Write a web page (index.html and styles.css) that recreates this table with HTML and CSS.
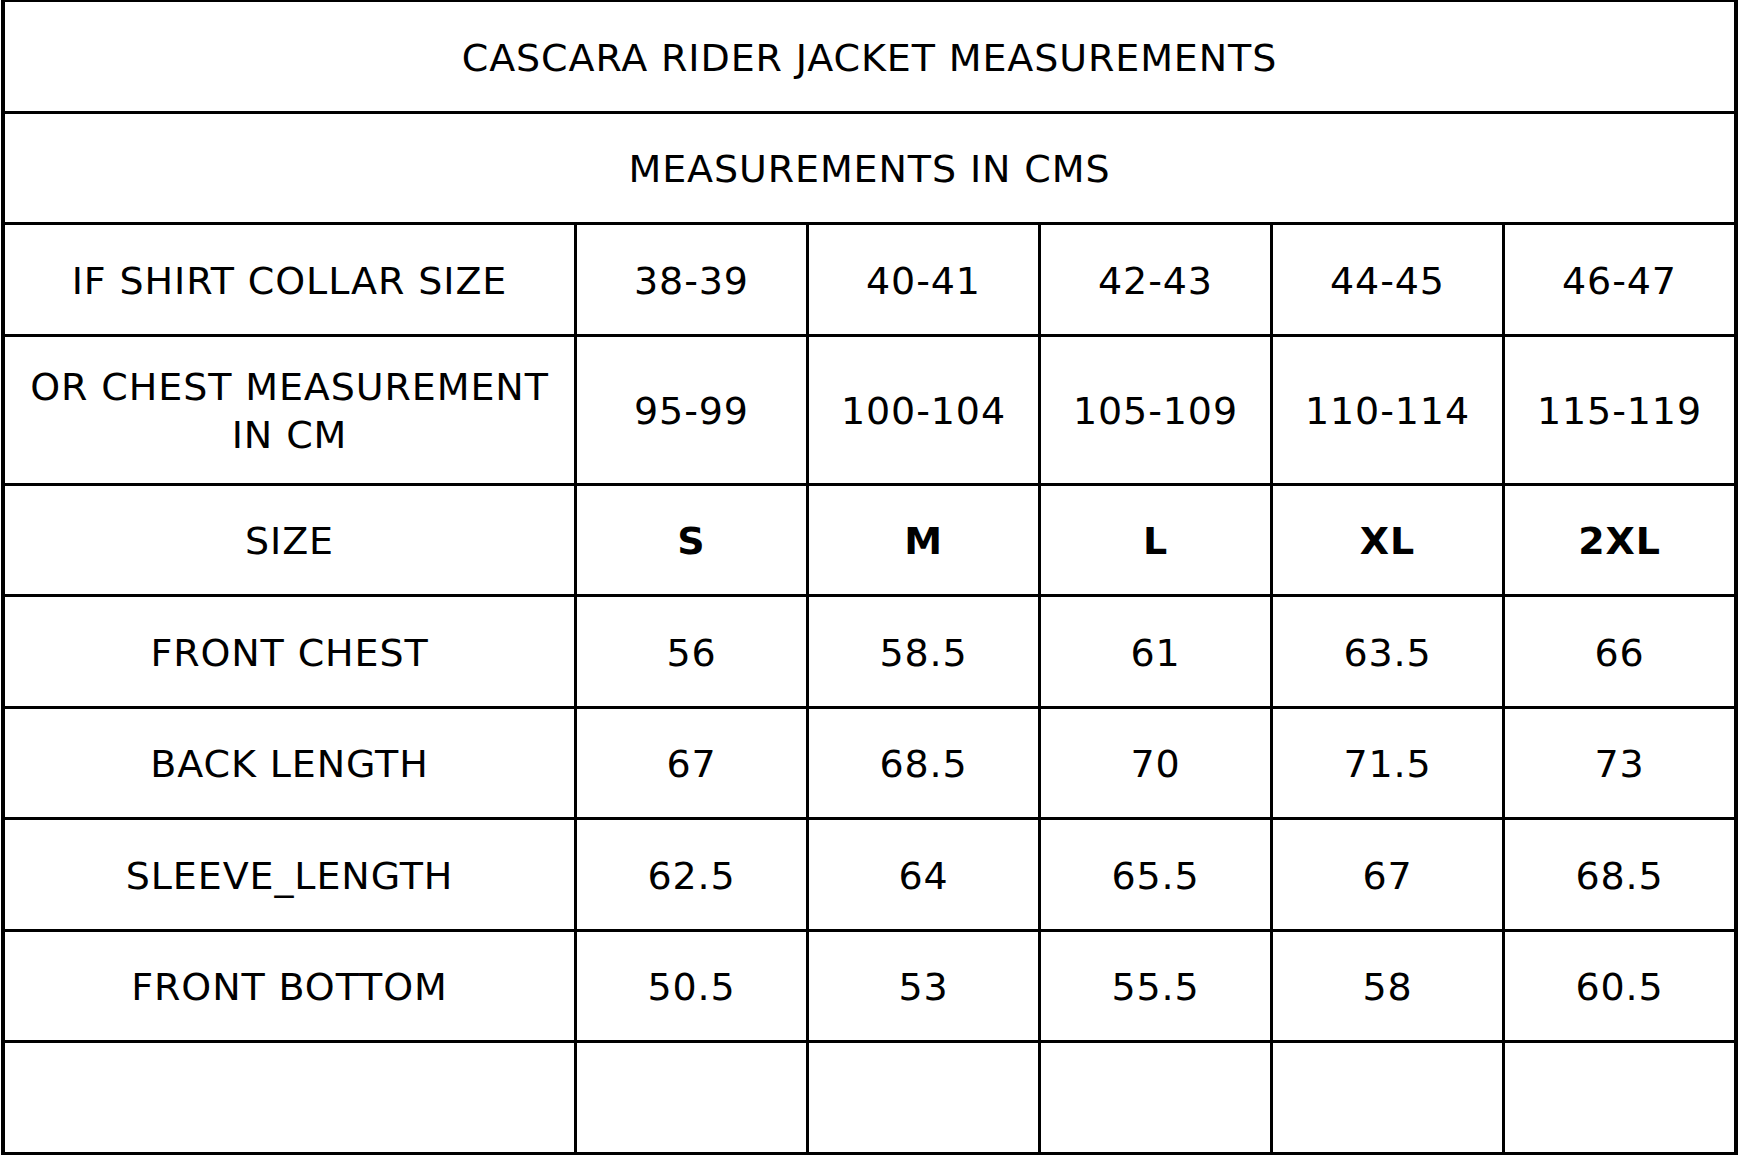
FILE: index.html
```html
<!DOCTYPE html>
<html lang="en">
<head>
<meta charset="utf-8">
<title>Cascara Rider Jacket Measurements</title>
<link rel="stylesheet" href="styles.css">
</head>
<body>
<div class="chart">
  <div class="cell span">CASCARA RIDER JACKET MEASUREMENTS</div>
  <div class="cell span">MEASUREMENTS IN CMS</div>

  <div class="cell">IF SHIRT COLLAR SIZE</div>
  <div class="cell">38-39</div>
  <div class="cell">40-41</div>
  <div class="cell">42-43</div>
  <div class="cell">44-45</div>
  <div class="cell">46-47</div>

  <div class="cell">OR CHEST MEASUREMENT<br>IN CM</div>
  <div class="cell">95-99</div>
  <div class="cell">100-104</div>
  <div class="cell">105-109</div>
  <div class="cell">110-114</div>
  <div class="cell">115-119</div>

  <div class="cell">SIZE</div>
  <div class="cell bold">S</div>
  <div class="cell bold">M</div>
  <div class="cell bold">L</div>
  <div class="cell bold">XL</div>
  <div class="cell bold">2XL</div>

  <div class="cell">FRONT CHEST</div>
  <div class="cell">56</div>
  <div class="cell">58.5</div>
  <div class="cell">61</div>
  <div class="cell">63.5</div>
  <div class="cell">66</div>

  <div class="cell">BACK LENGTH</div>
  <div class="cell">67</div>
  <div class="cell">68.5</div>
  <div class="cell">70</div>
  <div class="cell">71.5</div>
  <div class="cell">73</div>

  <div class="cell">SLEEVE_LENGTH</div>
  <div class="cell">62.5</div>
  <div class="cell">64</div>
  <div class="cell">65.5</div>
  <div class="cell">67</div>
  <div class="cell">68.5</div>

  <div class="cell">FRONT BOTTOM</div>
  <div class="cell">50.5</div>
  <div class="cell">53</div>
  <div class="cell">55.5</div>
  <div class="cell">58</div>
  <div class="cell">60.5</div>

  <div class="cell"></div>
  <div class="cell"></div>
  <div class="cell"></div>
  <div class="cell"></div>
  <div class="cell"></div>
  <div class="cell"></div>
</div>
</body>
</html>
```
FILE: styles.css
```css
html, body {
  margin: 0;
  padding: 0;
  background: #ffffff;
}

body {
  font-family: "DejaVu Sans", Verdana, sans-serif;
  color: #000000;
}

.chart {
  display: grid;
  width: max-content;
  margin: -2px 0 0 1px;
  border: 4px solid #000000;
  background: #000000;
  gap: 3px;
  grid-template-columns: 569px repeat(5, 229px);
  grid-template-rows: 108.5px 108.5px 108.5px 146px repeat(6, 108.5px);
}

.cell {
  background: #ffffff;
  display: flex;
  align-items: center;
  justify-content: center;
  text-align: center;
  padding-top: 3px;
  font-size: 38px;
  letter-spacing: 0.9px;
  line-height: 1.27;
}

.span {
  grid-column: 1 / -1;
}

.bold {
  font-weight: bold;
}
```
